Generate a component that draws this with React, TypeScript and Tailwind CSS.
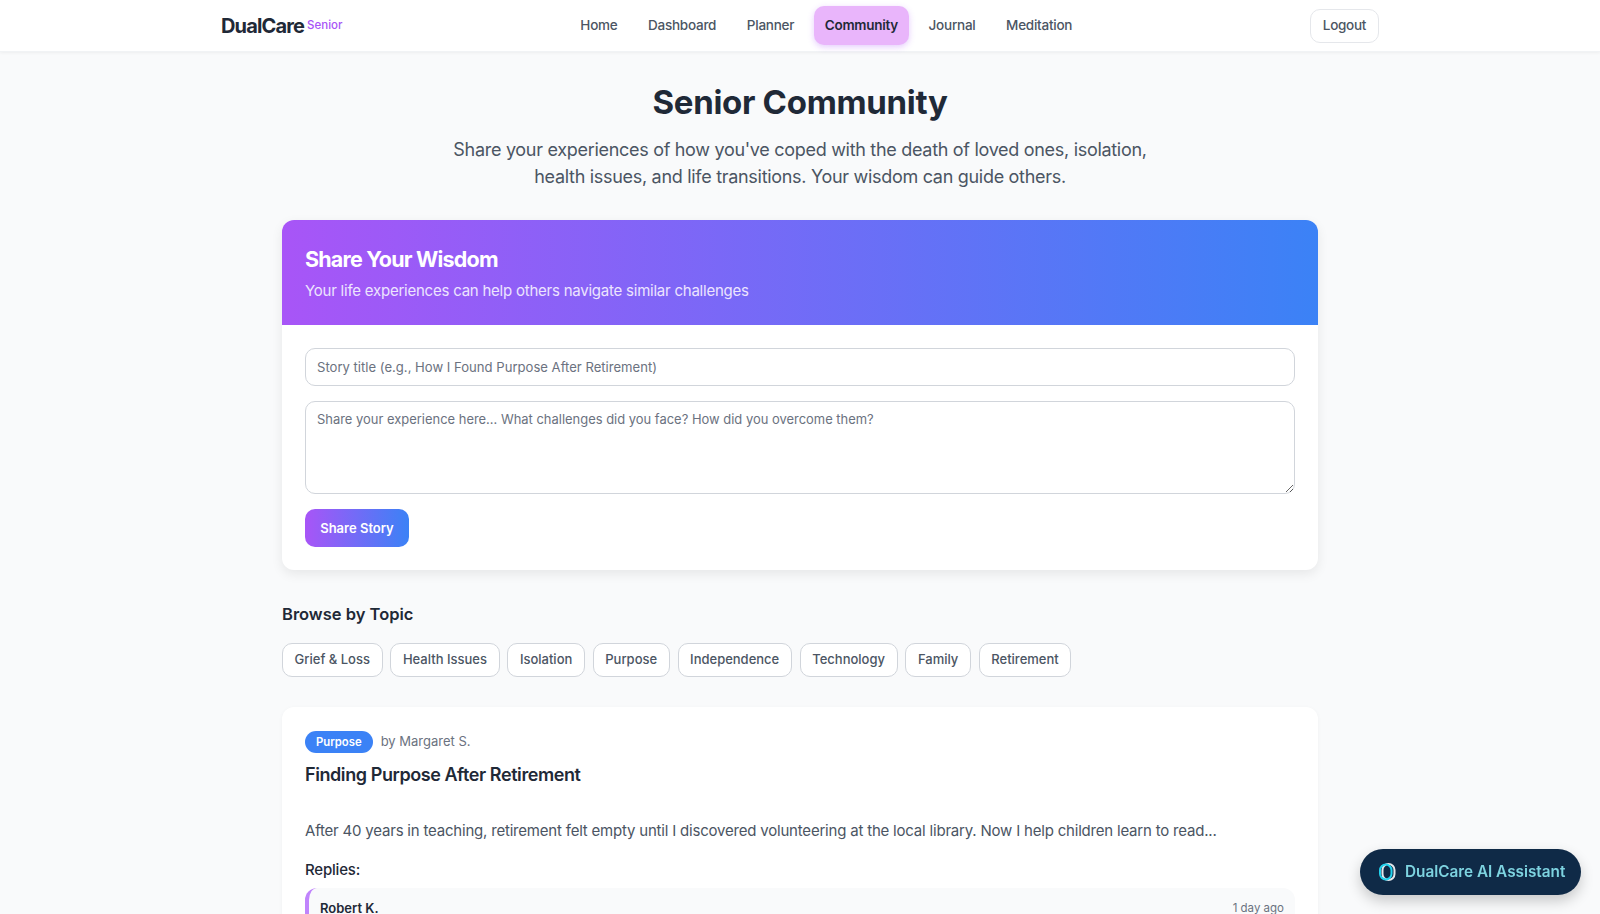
const navLinks = ["Home", "Dashboard", "Planner", "Community", "Journal", "Meditation"];
const topics = ["Grief & Loss", "Health Issues", "Isolation", "Purpose", "Independence", "Technology", "Family", "Retirement"];

function Header() {
  return (
    <header className="h-[52px] border-b border-[#f1f3f5] bg-white shadow-[0_1px_3px_rgba(0,0,0,0.05)]">
      <div className="mx-auto flex h-[51px] max-w-[1200px] items-center justify-between px-[21px]">
        <div className="flex items-center gap-[3px]">
          <span className="text-[20px] font-bold tracking-[-0.85px] text-[#1f2937]">DualCare</span>
          <span className="text-[11.5px] font-medium text-[#a855f7]">Senior</span>
        </div>
        <nav className="flex items-center gap-2">
          {navLinks.map((link) =>
            link === "Community" ? (
              <a key={link} className="rounded-[10px] bg-[#e9b5fb] px-[11.3px] py-[9px] text-[13.5px] font-semibold tracking-[-0.26px] text-[#1f2937] shadow-[0_2px_6px_rgba(168,85,247,0.3)]">
                {link}
              </a>
            ) : (
              <a key={link} className="px-[11.3px] py-[9px] text-[13.5px] font-medium tracking-[-0.25px] text-[#4b5563]">
                {link}
              </a>
            )
          )}
        </nav>
        <button className="h-[34px] w-[69px] rounded-[10px] border border-[#e5e7eb] bg-white text-[13.5px] font-medium tracking-[-0.3px] text-[#4b5563]">
          Logout
        </button>
      </div>
    </header>
  );
}

function ShareCard() {
  return (
    <section className="mt-[30px] overflow-hidden rounded-xl bg-white shadow-[0_4px_12px_rgba(0,0,0,0.08)]">
      <div className="h-[105px] bg-linear-to-r/srgb from-[#a855f7] to-[#3b82f6] px-[23px] pt-[23px] text-white">
        <h2 className="text-[21.5px] leading-8 font-bold tracking-[-0.8px]">Share Your Wisdom</h2>
        <p className="mt-1 text-[15px] leading-6 tracking-[-0.23px] text-[#ece4fe]">Your life experiences can help others navigate similar challenges</p>
      </div>
      <div className="flex flex-col items-start px-[23px] pt-[23px] pb-[23px]">
        <input
          className="h-[38px] w-full rounded-[10px] border border-[#d1d5db] px-[11px] text-[13.1px] outline-none placeholder:text-[#6b7280]"
          placeholder="Story title (e.g., How I Found Purpose After Retirement)"
        />
        <textarea
          className="mt-[15px] block h-[93px] w-full rounded-[10px] border border-[#d1d5db] px-[11px] py-2 text-[12.95px] outline-none placeholder:text-[#6b7280]"
          placeholder="Share your experience here... What challenges did you face? How did you overcome them?"
        />
        <button className="mt-[15px] h-[38px] w-[104px] rounded-[10px] bg-linear-to-r/srgb from-[#a855f7] to-[#3b82f6] pt-px text-[13px] font-semibold text-white">
          Share Story
        </button>
      </div>
    </section>
  );
}

function TopicFilter() {
  return (
    <section className="mt-[30px]">
      <h3 className="text-[16.5px] leading-7 font-semibold text-[#1f2937]">Browse by Topic</h3>
      <div className="mt-[15px] flex flex-wrap gap-[7.75px]">
        {topics.map((topic) => (
          <button key={topic} className="h-[34px] rounded-[10px] border border-[#d1d5db] bg-white px-[11.6px] text-[13px] font-medium text-[#4b5563]">
            {topic}
          </button>
        ))}
      </div>
    </section>
  );
}

function StoryCard() {
  return (
    <article className="mt-[30px] rounded-xl bg-white px-[23px] pt-6 pb-6 shadow-[0_1px_4px_rgba(0,0,0,0.04)]">
      <div className="flex items-center gap-2">
        <span className="rounded-full bg-[#3b82f6] px-[11px] py-[3px] text-[11.3px] leading-4 font-semibold text-white">Purpose</span>
        <span className="text-[13px] text-[#6b7280]">by Margaret S.</span>
      </div>
      <h4 className="mt-2 text-[18px] leading-7 font-semibold tracking-[-0.42px] text-[#1f2937]">Finding Purpose After Retirement</h4>
      <p className="mt-[30px] text-[15px] leading-6 tracking-[-0.2px] text-[#4b5563]">
        After 40 years in teaching, retirement felt empty until I discovered volunteering at the local library. Now I help children learn to read...
      </p>
      <h5 className="mt-[15px] text-[15px] leading-6 font-medium tracking-[-0.2px] text-[#1f2937]">Replies:</h5>
      <div className="mt-[6px] rounded-xl border-l-4 border-[#c084fc] bg-[#f9fafb] pt-[11px] pr-[11px] pb-4 pl-[11px]">
        <div className="flex items-center justify-between">
          <span className="text-[13px] font-semibold text-[#1f2937]">Robert K.</span>
          <span className="text-[11.5px] text-[#6b7280]">1 day ago</span>
        </div>
      </div>
    </article>
  );
}

function AssistantButton() {
  return (
    <button className="fixed right-[19px] bottom-[19px] flex h-[46px] w-[221px] items-center gap-[9px] rounded-full bg-[#0f2a47] pl-[18px] shadow-[0_6px_14px_rgba(0,0,0,0.2)]">
      <svg width="18" height="18" viewBox="0 0 18 18" fill="none">
        <rect x="4.5" y="1" width="12" height="16" rx="6" stroke="#e5e7eb" strokeWidth="2" />
        <rect x="2" y="1.5" width="11.5" height="15" rx="5.75" stroke="#22d3ee" strokeWidth="2" />
      </svg>
      <span className="pt-px text-[15.3px] font-semibold text-[#7dd3e0]">DualCare AI Assistant</span>
    </button>
  );
}

export default function App() {
  return (
    <div className="min-h-screen bg-[#f9fafb] font-['Inter',sans-serif]">
      <Header />
      <main className="mx-auto max-w-[1100px] px-8 pt-[25px] pb-10">
        <div className="text-center">
          <h1 className="text-[33px] leading-[50px] font-bold tracking-[-0.3px] text-[#1f2937]">Senior Community</h1>
          <p className="mx-auto mt-[10px] max-w-[720px] text-[18px] leading-[26.5px] tracking-[-0.3px] text-[#4b5563]">
            Share your experiences of how you've coped with the death of loved ones, isolation, health issues, and life transitions. Your wisdom can guide others.
          </p>
        </div>
        <ShareCard />
        <TopicFilter />
        <StoryCard />
      </main>
      <AssistantButton />
    </div>
  );
}
